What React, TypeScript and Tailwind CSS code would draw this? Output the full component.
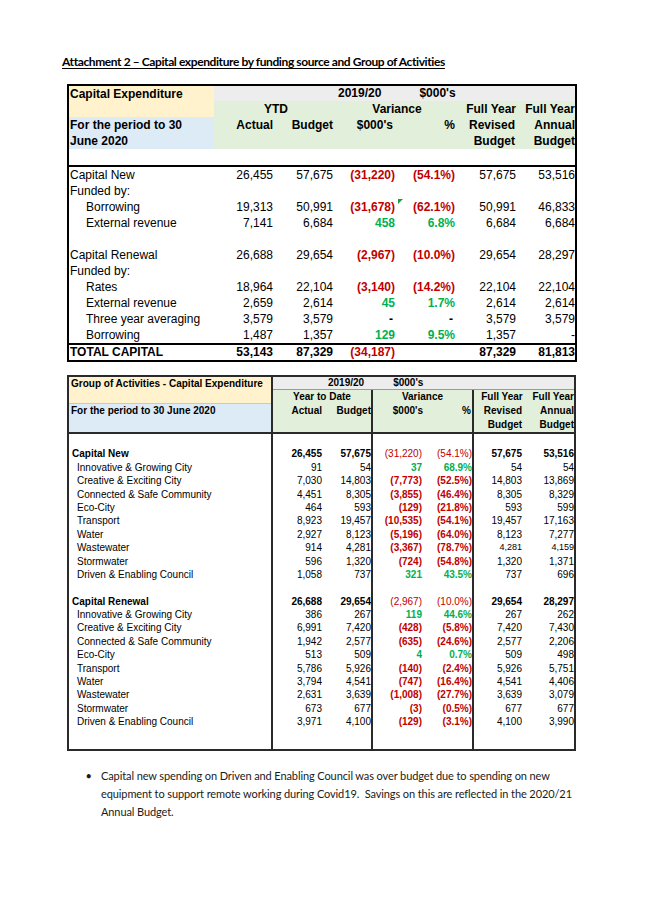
import React from "react";

const ARIAL = "font-['Liberation_Sans',Arial,sans-serif]";
const RED = "text-[#c00000]";
const GREEN = "text-[#00b050]";

function varColor(v: string) {
  if (v.startsWith("(")) return RED;
  if (v === "-" || v === "") return "text-black";
  return GREEN;
}

type R1 = { label: string; indent?: boolean; vals?: string[]; triangle?: boolean };

const t1Rows: R1[] = [
  { label: "Capital New", vals: ["26,455", "57,675", "(31,220)", "(54.1%)", "57,675", "53,516"] },
  { label: "Funded by:" },
  { label: "Borrowing", indent: true, vals: ["19,313", "50,991", "(31,678)", "(62.1%)", "50,991", "46,833"], triangle: true },
  { label: "External revenue", indent: true, vals: ["7,141", "6,684", "458", "6.8%", "6,684", "6,684"] },
  { label: "" },
  { label: "Capital Renewal", vals: ["26,688", "29,654", "(2,967)", "(10.0%)", "29,654", "28,297"] },
  { label: "Funded by:" },
  { label: "Rates", indent: true, vals: ["18,964", "22,104", "(3,140)", "(14.2%)", "22,104", "22,104"] },
  { label: "External revenue", indent: true, vals: ["2,659", "2,614", "45", "1.7%", "2,614", "2,614"] },
  { label: "Three year averaging", indent: true, vals: ["3,579", "3,579", "-", "-", "3,579", "3,579"] },
  { label: "Borrowing", indent: true, vals: ["1,487", "1,357", "129", "9.5%", "1,357", "-"] },
];

const T1COLS = "grid grid-cols-[145px_62px_60px_62px_60px_60px_57px]";

function Table1Row({ r }: { r: R1 }) {
  const v = r.vals || ["", "", "", "", "", ""];
  return (
    <div className={`${T1COLS} h-[16px] leading-[16px] text-[12px] text-black`}>
      <div className={`${r.indent ? "pl-[17px]" : "pl-[1px]"} whitespace-nowrap`}>{r.label}</div>
      <div className="text-right pr-[3px]">{v[0]}</div>
      <div className="text-right pr-[3px]">{v[1]}</div>
      <div className={`text-right font-bold ${v[2] === "-" ? "pr-[5px]" : "pr-[3px]"} ${varColor(v[2])}`}>{v[2]}</div>
      <div className={`relative text-right font-bold ${v[3] === "-" ? "pr-[5px]" : "pr-[3px]"} ${varColor(v[3])}`}>
        {r.triangle && (
          <svg className="absolute left-0 top-0" width="5" height="5" viewBox="0 0 5 5">
            <polygon points="0,0 5,0 0,5" fill="#1e9e3a" />
          </svg>
        )}
        {v[3]}
      </div>
      <div className="text-right pr-[2px]">{v[4]}</div>
      <div className="text-right pr-0">{v[5]}</div>
    </div>
  );
}

function Table1() {
  return (
    <div className={`${ARIAL} ml-[67px] w-[510px] border-2 border-black`}>
      <div className="flex">
        <div className="w-[145px] shrink-0 text-[12px] font-bold leading-[16px] text-black">
          <div className="h-[31px] bg-[#fff2cc] pl-[1px] pt-0">Capital Expenditure</div>
          <div className="h-[32px] bg-[#ddebf7] pl-[1px]">
            For the period to 30
            <br />
            June 2020
          </div>
        </div>
        <div className="flex-1 text-[12px] font-bold leading-[16px] text-black">
          <div className="h-[15px] bg-[#ededed] flex leading-[15px]">
            <span className="ml-[124px]">2019/20</span>
            <span className="ml-[38px]">$000's</span>
          </div>
          <div className="bg-[#e2efda] grid grid-cols-[62px_60px_62px_60px_60px_57px]">
            <div className="col-span-2 text-center pl-[2px]">YTD</div>
            <div className="col-span-2 text-center">Variance</div>
            <div className="text-right pr-[2px] whitespace-nowrap">Full Year</div>
            <div className="text-right pr-0 whitespace-nowrap">Full Year</div>

            <div className="text-right pr-[3px]">Actual</div>
            <div className="text-right pr-[3px]">Budget</div>
            <div className="text-right pr-[5px]">$000's</div>
            <div className="text-right pr-[3px]">%</div>
            <div className="text-right pr-[3px]">Revised</div>
            <div className="text-right pr-0">Annual</div>

            <div className="h-[16px]" />
            <div />
            <div />
            <div />
            <div className="text-right pr-[3px]">Budget</div>
            <div className="text-right pr-0">Budget</div>
          </div>
        </div>
      </div>
      <div className="h-[16px]" />
      <div className="h-[2px] bg-black" />
      {t1Rows.map((r, i) => (
        <Table1Row key={i} r={r} />
      ))}
      <div className="h-[2px] bg-black" />
      <div className={`${T1COLS} h-[15px] leading-[15px] text-[12px] font-bold text-black`}>
        <div className="pl-[1px]">TOTAL CAPITAL</div>
        <div className="text-right pr-[3px]">53,143</div>
        <div className="text-right pr-[3px]">87,329</div>
        <div className={`text-right pr-[3px] ${RED}`}>(34,187)</div>
        <div />
        <div className="text-right pr-[2px]">87,329</div>
        <div className="text-right pr-0">81,813</div>
      </div>
    </div>
  );
}

type R2 = { label: string; head?: boolean; vals?: string[]; small?: boolean; tall?: boolean };

const t2Rows: R2[] = [
  { label: "" },
  { label: "Capital New", head: true, vals: ["26,455", "57,675", "(31,220)", "(54.1%)", "57,675", "53,516"] },
  { label: "Innovative & Growing City", vals: ["91", "54", "37", "68.9%", "54", "54"] },
  { label: "Creative & Exciting City", vals: ["7,030", "14,803", "(7,773)", "(52.5%)", "14,803", "13,869"] },
  { label: "Connected & Safe Community", vals: ["4,451", "8,305", "(3,855)", "(46.4%)", "8,305", "8,329"] },
  { label: "Eco-City", vals: ["464", "593", "(129)", "(21.8%)", "593", "599"] },
  { label: "Transport", vals: ["8,923", "19,457", "(10,535)", "(54.1%)", "19,457", "17,163"] },
  { label: "Water", vals: ["2,927", "8,123", "(5,196)", "(64.0%)", "8,123", "7,277"] },
  { label: "Wastewater", vals: ["914", "4,281", "(3,367)", "(78.7%)", "4,281", "4,159"], small: true },
  { label: "Stormwater", vals: ["596", "1,320", "(724)", "(54.8%)", "1,320", "1,371"] },
  { label: "Driven & Enabling Council", vals: ["1,058", "737", "321", "43.5%", "737", "696"] },
  { label: "" },
  { label: "Capital Renewal", head: true, vals: ["26,688", "29,654", "(2,967)", "(10.0%)", "29,654", "28,297"] },
  { label: "Innovative & Growing City", vals: ["386", "267", "119", "44.6%", "267", "262"] },
  { label: "Creative & Exciting City", vals: ["6,991", "7,420", "(428)", "(5.8%)", "7,420", "7,430"] },
  { label: "Connected & Safe Community", vals: ["1,942", "2,577", "(635)", "(24.6%)", "2,577", "2,206"] },
  { label: "Eco-City", vals: ["513", "509", "4", "0.7%", "509", "498"] },
  { label: "Transport", vals: ["5,786", "5,926", "(140)", "(2.4%)", "5,926", "5,751"] },
  { label: "Water", vals: ["3,794", "4,541", "(747)", "(16.4%)", "4,541", "4,406"] },
  { label: "Wastewater", vals: ["2,631", "3,639", "(1,008)", "(27.7%)", "3,639", "3,079"] },
  { label: "Stormwater", vals: ["673", "677", "(3)", "(0.5%)", "677", "677"] },
  { label: "Driven & Enabling Council", vals: ["3,971", "4,100", "(129)", "(3.1%)", "4,100", "3,990"] },
  { label: "", tall: true },
];

const T2COLS = "grid grid-cols-[204px_50px_50px_51px_50px_52px_48px]";
const LINE = "border-[#2a2a2a]";

function Table2Row({ r }: { r: R2 }) {
  const v = r.vals || ["", "", "", "", "", ""];
  const numB = r.head ? "font-bold" : "";
  const varB = r.head ? "" : "font-bold";
  return (
    <div className={`${T2COLS} ${r.tall ? "h-[20px]" : "h-[13.4px]"} leading-[13.4px] text-[10px] text-black`}>
      <div className={`border-r-2 ${LINE} whitespace-nowrap ${r.head ? "pl-[3px] font-bold" : "pl-[8px]"}`}>{r.label}</div>
      <div className={`text-right pr-[1px] ${numB}`}>{v[0]}</div>
      <div className={`text-right pr-0 border-r-2 ${LINE} ${numB}`}>{v[1]}</div>
      <div className={`text-right pr-[2px] ${varB} ${varColor(v[2])}`}>{v[2]}</div>
      <div className={`text-right pr-0 border-r-2 ${LINE} ${varB} ${varColor(v[3])}`}>{v[3]}</div>
      <div className={`text-right pr-[4px] ${numB} ${r.small ? "text-[9px]" : ""}`}>{v[4]}</div>
      <div className={`text-right pr-0 ${numB} ${r.small ? "text-[9px]" : ""}`}>{v[5]}</div>
    </div>
  );
}

function Table2() {
  return (
    <div className={`${ARIAL} ml-[67px] mt-[13px] w-[509px] border-2 ${LINE}`}>
      <div className="flex text-[10px] font-bold leading-[14px] text-black">
        <div className={`w-[204px] shrink-0 border-r-2 ${LINE}`}>
          <div className="h-[27px] bg-[#fff2cc] border-b border-[#c9c9c9] pl-[2px]">Group of Activities - Capital Expenditure</div>
          <div className="h-[28px] bg-[#ddebf7] pl-[2px]">For the period to 30 June 2020</div>
        </div>
        <div className="flex-1">
          <div className="h-[13px] bg-[#ededed] border-b border-[#9a9a9a] flex leading-[12px]">
            <span className="ml-[55px]">2019/20</span>
            <span className="ml-[29px]">$000's</span>
          </div>
          <div className="flex bg-[#e2efda] h-[42px]">
            <div className={`w-[100px] border-r-2 ${LINE}`}>
              <div className="h-[14px] text-center">Year to Date</div>
              <div className="grid grid-cols-[50px_48px] h-[14px]">
                <div className="text-right pr-[1px]">Actual</div>
                <div className="text-right pr-0">Budget</div>
              </div>
            </div>
            <div className={`w-[101px] border-r-2 ${LINE}`}>
              <div className="h-[14px] text-center">Variance</div>
              <div className="grid grid-cols-[51px_48px] h-[14px]">
                <div className="text-right pr-[1px]">$000's</div>
                <div className="text-right pr-[1px]">%</div>
              </div>
            </div>
            <div className="w-[100px] grid grid-cols-[52px_48px] grid-rows-[14px_14px_14px]">
              <div className="text-center whitespace-nowrap pl-[4px]">Full Year</div>
              <div className="text-right pr-0 whitespace-nowrap">Full Year</div>
              <div className="text-center pl-[6px]">Revised</div>
              <div className="text-right pr-0">Annual</div>
              <div className="text-center pl-[10px]">Budget</div>
              <div className="text-right pr-0">Budget</div>
            </div>
          </div>
        </div>
      </div>
      <div className="h-[2px] bg-[#2a2a2a]" />
      {t2Rows.map((r, i) => (
        <Table2Row key={i} r={r} />
      ))}
    </div>
  );
}

export default function App() {
  return (
    <div className="w-[645px] h-[912px] bg-white relative overflow-hidden">
      <div className="pt-[54px]">
        <div className="pl-[62px] font-['Lato',sans-serif] font-bold text-[12px] leading-[16px] tracking-[-0.4px] text-black underline underline-offset-[2px] whitespace-nowrap">
          Attachment 2 – Capital expenditure by funding source and Group of Activities
        </div>
        <div className="mt-[14px]">
          <Table1 />
        </div>
        <Table2 />
        <div className="mt-[16px] flex font-['Lato',sans-serif] text-[11px] leading-[18px] text-[#1a1a1a]">
          <div className="w-[101px] shrink-0 text-right pr-[9px]">•</div>
          <div className="whitespace-nowrap tracking-[-0.1px]">
            Capital new spending on Driven and Enabling Council was over budget due to spending on new
            <br />
            equipment to support remote working during Covid19.&nbsp; Savings on this are reflected in the 2020/21
            <br />
            Annual Budget.
          </div>
        </div>
      </div>
    </div>
  );
}
